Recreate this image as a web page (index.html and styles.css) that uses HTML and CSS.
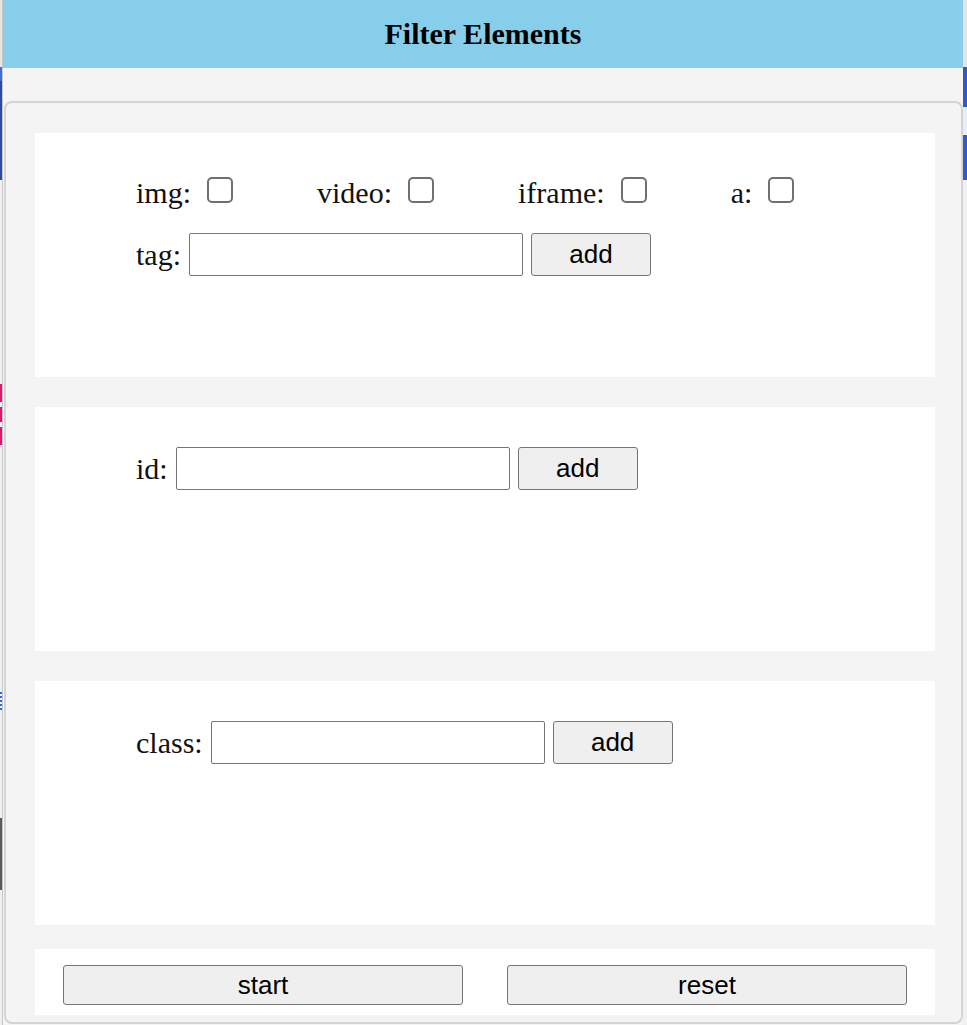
FILE: index.html
```html
<!DOCTYPE html>
<html lang="en">
<head>
<meta charset="utf-8">
<title>Filter Elements</title>
<link rel="stylesheet" href="styles.css">
</head>
<body>
<div class="page">
  <div class="edge edge-left">
    <div class="seg seg-top"></div>
    <div class="seg seg-blue"></div>
    <div class="seg seg-light h1"></div>
    <div class="seg seg-pink h2"></div>
    <div class="seg seg-light h3"></div>
    <div class="seg seg-pink h4"></div>
    <div class="seg seg-light h3"></div>
    <div class="seg seg-pink h5"></div>
    <div class="seg seg-light h6"></div>
    <div class="seg seg-stripe h7"></div>
    <div class="seg seg-light h8"></div>
    <div class="seg seg-dark h9"></div>
    <div class="seg seg-light grow"></div>
  </div>

  <div class="app">
    <header class="app-header">Filter Elements</header>
    <div class="app-body">
      <div class="panel">
        <section class="card card-tall">
          <div class="row row-checks">
            <label class="check-group"><span class="lbl">img:</span><input type="checkbox" class="check"></label>
            <label class="check-group"><span class="lbl">video:</span><input type="checkbox" class="check"></label>
            <label class="check-group"><span class="lbl">iframe:</span><input type="checkbox" class="check"></label>
            <label class="check-group"><span class="lbl">a:</span><input type="checkbox" class="check"></label>
          </div>
          <div class="row row-field row-tag">
            <span class="lbl">tag:</span>
            <input type="text" class="text-input">
            <button class="btn btn-add">add</button>
          </div>
        </section>

        <section class="card card-tall">
          <div class="row row-field">
            <span class="lbl">id:</span>
            <input type="text" class="text-input">
            <button class="btn btn-add">add</button>
          </div>
        </section>

        <section class="card card-tall">
          <div class="row row-field">
            <span class="lbl">class:</span>
            <input type="text" class="text-input">
            <button class="btn btn-add">add</button>
          </div>
        </section>

        <section class="card card-actions">
          <button class="btn btn-wide">start</button>
          <button class="btn btn-wide">reset</button>
        </section>
      </div>
    </div>
  </div>

  <div class="edge edge-right">
    <div class="seg seg-top"></div>
    <div class="seg seg-blue-r"></div>
    <div class="seg seg-light grow"></div>
  </div>
</div>
</body>
</html>
```

FILE: styles.css
```css
html, body {
  margin: 0;
  padding: 0;
  background: #f4f4f4;
}

.page {
  display: flex;
  width: 967px;
  height: 1025px;
  overflow: hidden;
}

/* background page peeking at the edges */
.edge {
  display: flex;
  flex-direction: column;
  flex: none;
}
.edge-left {
  width: 3px;
  border-right: 1px solid #c6c6c6;
  box-sizing: border-box;
}
.edge-right {
  width: 4px;
}
.seg { width: 100%; flex: none; }
.seg.grow { flex: 1; }
.seg-top { height: 67px; background: #e4e4e4; }
.seg-blue { height: 113px; background: linear-gradient(#3b6fd6 0 14px, #2b4c9c 14px); }
.seg-blue-r { height: 113px; background: linear-gradient(#2f5bc8 0 40px, #e8eef9 40px 68px, #2f5bc8 68px); }
.seg-light { background: #f0f0f0; }
.seg-pink { background: #e0146c; }
.seg-stripe { background: repeating-linear-gradient(#2f6ad6 0 2px, #f0f0f0 2px 4px); }
.seg-dark { background: #5a5a5a; }
.h1 { height: 204px; }
.h2 { height: 18px; }
.h3 { height: 5px; }
.h4 { height: 15px; }
.h5 { height: 18px; }
.h6 { height: 247px; }
.h7 { height: 20px; }
.h8 { height: 106px; }
.h9 { height: 72px; }

.app {
  width: 960px;
  flex: none;
  display: flex;
  flex-direction: column;
  background: #f4f4f4;
}

.app-header {
  height: 68px;
  line-height: 68px;
  background: #87ceeb;
  text-align: center;
  font-family: "Liberation Serif", "Times New Roman", serif;
  font-weight: bold;
  font-size: 30px;
  color: #000;
}

.app-body {
  padding-top: 33px;
  padding-left: 1px;
}

.panel {
  width: 959px;
  box-sizing: border-box;
  border: 2px solid #d4d4d4;
  border-radius: 8px;
  padding: 30px 26px 7px 29px;
  display: flex;
  flex-direction: column;
  gap: 30px;
}

.card {
  background: #fff;
  box-sizing: border-box;
}
.card-tall {
  height: 244px;
  padding: 40px 0 0 101px;
}
.card-tall:first-child {
  padding-top: 43px;
}
.card-actions {
  margin-top: -6px;
  height: 66px;
  padding: 16px 28px;
  display: flex;
  justify-content: space-between;
  align-items: flex-start;
}

.row {
  display: flex;
}
.row-checks {
  align-items: flex-end;
  gap: 84px;
  height: 34px;
}
.row-field {
  align-items: center;
  gap: 8px;
}
.row-tag {
  margin-top: 23px;
}

.lbl {
  font-family: "Liberation Serif", "Times New Roman", serif;
  font-size: 30px;
  line-height: 34px;
  color: #111;
}

.check-group {
  display: flex;
  align-items: flex-end;
  gap: 16px;
}

.check {
  appearance: none;
  -webkit-appearance: none;
  margin: 0 0 7px 0;
  width: 26px;
  height: 26px;
  box-sizing: border-box;
  border: 2px solid #707070;
  border-radius: 5px;
  background: #fff;
}

.text-input {
  width: 334px;
  height: 43px;
  box-sizing: border-box;
  margin: 0;
  border: 1px solid #767676;
  border-radius: 2px;
  background: #fff;
  padding: 0 4px;
  font-family: "Liberation Sans", Arial, sans-serif;
  font-size: 20px;
}

.btn {
  margin: 0;
  box-sizing: border-box;
  border: 1px solid #767676;
  border-radius: 3px;
  background: #efefef;
  color: #000;
  font-family: "Liberation Sans", Arial, sans-serif;
  font-size: 26px;
  padding: 0;
}
.btn-add {
  width: 120px;
  height: 43px;
}
.btn-wide {
  width: 400px;
  height: 40px;
}
```
